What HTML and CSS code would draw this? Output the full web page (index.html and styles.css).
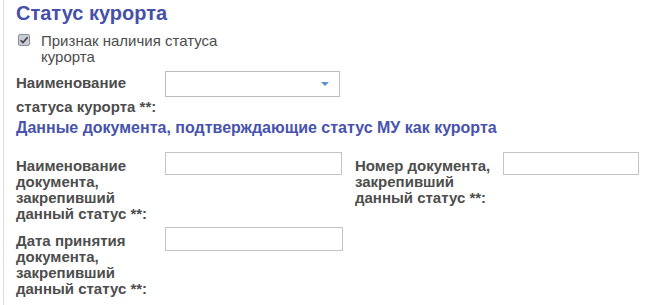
FILE: index.html
```html
<!DOCTYPE html>
<html lang="ru">
<head>
<meta charset="utf-8">
<link rel="stylesheet" href="styles.css">
</head>
<body>
<div class="panel">
  <h2 class="title">Статус курорта</h2>
  <div class="check-row">
    <svg class="checkbox" width="12" height="12" viewBox="0 0 12 12">
      <rect x="0.5" y="0.5" width="11" height="11" rx="1.5" fill="#c9ccd3" stroke="#8c9099"/>
      <path d="M2.6 6.2 L5 8.6 L9.6 3.2" fill="none" stroke="#3d3f44" stroke-width="1.6"/>
    </svg>
    <span class="check-text">Признак наличия статуса<br>курорта</span>
  </div>
  <div class="row row-select">
    <div class="label label-wide">Наименование<br>статуса курорта **:</div>
    <div class="select"><span class="arrow"></span></div>
  </div>
  <h3 class="subtitle">Данные документа, подтверждающие статус МУ как курорта</h3>
  <div class="row row-doc">
    <div class="label">Наименование<br>документа,<br>закрепивший<br>данный статус **:</div>
    <div class="input input-a"></div>
    <div class="label label-second">Номер документа,<br>закрепивший<br>данный статус **:</div>
    <div class="input input-b"></div>
  </div>
  <div class="row row-date">
    <div class="label">Дата принятия<br>документа,<br>закрепивший<br>данный статус **:</div>
    <div class="input input-c"></div>
  </div>
</div>
</body>
</html>
```
FILE: styles.css
```css
html, body {
  margin: 0;
  padding: 0;
  background: #ffffff;
}
body {
  font-family: "Liberation Sans", Arial, sans-serif;
  color: #4a4a4a;
  width: 645px;
  height: 305px;
  overflow: hidden;
}
.panel {
  margin-left: 3px;
  border-left: 1px solid #dcdcdc;
  padding-left: 12px;
  padding-top: 2px;
  height: 303px;
}
.title {
  margin: 0;
  font-size: 20px;
  line-height: 22px;
  font-weight: bold;
  color: #4551a9;
}
.check-row {
  display: flex;
  align-items: flex-start;
  margin-top: 9px;
}
.checkbox {
  margin-left: 2px;
  margin-top: 1px;
  flex: none;
}
.check-text {
  margin-left: 11px;
  font-size: 15px;
  line-height: 16px;
  color: #4d4d4d;
}
.row {
  display: flex;
  align-items: flex-start;
}
.row-select {
  margin-top: 6px;
}
.label {
  width: 149px;
  flex: none;
  font-size: 15px;
  font-weight: bold;
  line-height: 16px;
  padding-top: 6px;
  color: #4d4d4d;
}
.label-wide {
  line-height: 24px;
  padding-top: 0;
  white-space: nowrap;
}
.select {
  position: relative;
  width: 173px;
  height: 24px;
  border: 1px solid #bdbdbd;
  background: #fff;
}
.arrow {
  position: absolute;
  right: 10px;
  top: 10px;
  width: 0;
  height: 0;
  border-left: 4px solid transparent;
  border-right: 4px solid transparent;
  border-top: 4px solid #5d8fcf;
}
.subtitle {
  margin: 0;
  font-size: 16px;
  line-height: 18px;
  font-weight: bold;
  color: #4753ad;
}
.row-doc {
  margin-top: 15px;
}
.input {
  height: 21px;
  border: 1px solid #c4c4c4;
  background: #fff;
  flex: none;
}
.input-a {
  width: 175px;
}
.label-second {
  margin-left: 13px;
  width: 148px;
}
.input-b {
  width: 134px;
}
.row-date {
  margin-top: 5px;
}
.input-c {
  width: 176px;
  height: 22px;
}
```
